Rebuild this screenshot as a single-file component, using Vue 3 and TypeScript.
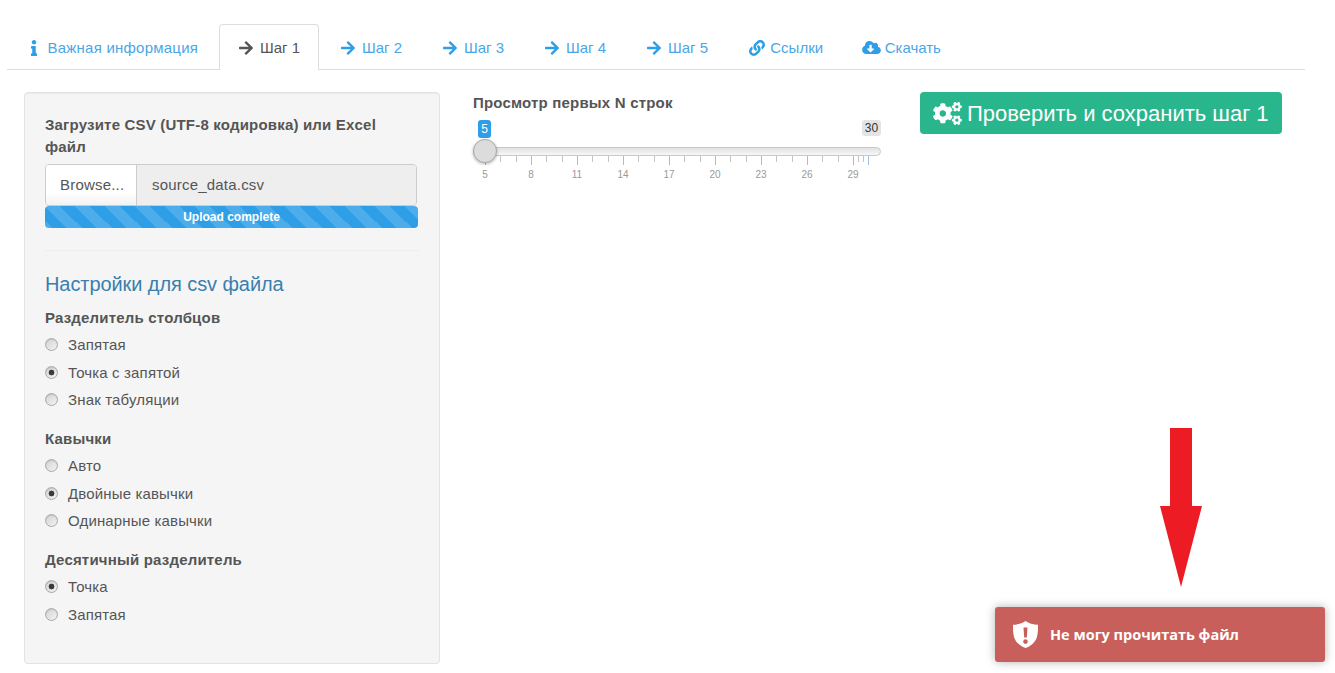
<script setup lang="ts">
interface Tab { label: string; icon: string; active?: boolean }
interface RadioGroup { title: string; name: string; options: { label: string; checked?: boolean }[] }

const tabs: Tab[] = [
  { label: 'Важная информация', icon: 'info' },
  { label: 'Шаг 1', icon: 'arrow', active: true },
  { label: 'Шаг 2', icon: 'arrow' },
  { label: 'Шаг 3', icon: 'arrow' },
  { label: 'Шаг 4', icon: 'arrow' },
  { label: 'Шаг 5', icon: 'arrow' },
  { label: 'Ссылки', icon: 'link' },
  { label: 'Скачать', icon: 'cloud' },
]

const groups: RadioGroup[] = [
  { title: 'Разделитель столбцов', name: 'sep', options: [{ label: 'Запятая' }, { label: 'Точка с запятой', checked: true }, { label: 'Знак табуляции' }] },
  { title: 'Кавычки', name: 'quote', options: [{ label: 'Авто' }, { label: 'Двойные кавычки', checked: true }, { label: 'Одинарные кавычки' }] },
  { title: 'Десятичный разделитель', name: 'dec', options: [{ label: 'Точка', checked: true }, { label: 'Запятая' }] },
]

const UNIT = 15.333
const pos = (v: number) => `${(v - 5) * UNIT}px`
const majors = [5, 8, 11, 14, 17, 20, 23, 26, 29]
const minors: number[] = []
for (let v = 5; v < 29; v++) if ((v - 5) % 3 !== 0) minors.push(v)
minors.push(29.33, 29.67)

const icons: Record<string, { box: string; d: string; w: number; h: number }> = {
  info: { box: '0 0 192 512', w: 6, h: 16, d: 'M20 424.229h20V279.771H20c-11.046 0-20-8.954-20-20V212c0-11.046 8.954-20 20-20h112c11.046 0 20 8.954 20 20v212.229h20c11.046 0 20 8.954 20 20V492c0 11.046-8.954 20-20 20H20c-11.046 0-20-8.954-20-20v-47.771c0-11.046 8.954-20 20-20zM96 0C56.235 0 24 32.235 24 72s32.235 72 72 72 72-32.235 72-72S135.764 0 96 0z' },
  arrow: { box: '0 0 448 512', w: 14, h: 16, d: 'M190.5 66.9l22.2-22.2c9.4-9.4 24.6-9.4 33.9 0L441 239c9.4 9.4 9.4 24.6 0 33.9L246.6 467.3c-9.4 9.4-24.6 9.4-33.9 0l-22.2-22.2c-9.5-9.5-9.3-25 .4-34.3L311.4 296H24c-13.3 0-24-10.7-24-24v-32c0-13.3 10.7-24 24-24h287.4L190.9 101.2c-9.8-9.3-10-24.8-.4-34.3z' },
  link: { box: '0 0 512 512', w: 16, h: 16, d: 'M326.612 185.391c59.747 59.809 58.927 155.698.36 214.59-.11.12-.24.25-.36.37l-67.2 67.2c-59.27 59.27-155.699 59.262-214.96 0-59.27-59.26-59.27-155.7 0-214.96l37.106-37.106c9.84-9.84 26.786-3.3 27.294 10.606.648 17.722 3.826 35.527 9.69 52.721 1.986 5.822.567 12.262-3.783 16.612l-13.087 13.087c-28.026 28.026-28.905 73.66-1.155 101.96 28.024 28.579 74.086 28.749 102.325.51l67.2-67.19c28.191-28.191 28.073-73.757 0-101.83-3.701-3.694-7.429-6.564-10.341-8.569a16.037 16.037 0 0 1-6.947-12.606c-.396-10.567 3.348-21.456 11.698-29.806l21.054-21.055c5.521-5.521 14.182-6.199 20.584-1.731a152.482 152.482 0 0 1 20.522 17.197zM467.547 44.449c-59.261-59.262-155.69-59.27-214.96 0l-67.2 67.2c-.12.12-.25.25-.36.37-58.566 58.892-59.387 154.781.36 214.59a152.454 152.454 0 0 0 20.521 17.196c6.402 4.468 15.064 3.789 20.584-1.731l21.054-21.055c8.35-8.35 12.094-19.239 11.698-29.806a16.037 16.037 0 0 0-6.947-12.606c-2.912-2.005-6.64-4.875-10.341-8.569-28.073-28.073-28.191-73.639 0-101.83l67.2-67.19c28.239-28.239 74.3-28.069 102.325.51 27.75 28.3 26.872 73.934-1.155 101.96l-13.087 13.087c-4.35 4.35-5.769 10.79-3.783 16.612 5.864 17.194 9.042 34.999 9.69 52.721.509 13.906 17.454 20.446 27.294 10.606l37.106-37.106c59.271-59.259 59.271-155.699.001-214.959z' },
  cloud: { box: '0 0 640 512', w: 19, h: 15, d: 'M537.6 226.6c4.1-10.7 6.4-22.4 6.4-34.6 0-53-43-96-96-96-19.7 0-38.1 6-53.3 16.2C367 64.2 315.3 32 256 32c-88.4 0-160 71.6-160 160 0 2.7.1 5.4.2 8.1C40.2 219.8 0 273.2 0 336c0 79.5 64.5 144 144 144h368c70.7 0 128-57.3 128-128 0-61.9-44-113.6-102.4-125.4zm-132.9 88.7L299.3 420.7c-6.2 6.2-16.4 6.2-22.6 0L171.3 315.3c-10.1-10.1-2.9-27.3 11.3-27.3H248V176c0-8.8 7.2-16 16-16h48c8.8 0 16 7.2 16 16v112h65.4c14.2 0 21.4 17.2 11.3 27.3z' },
}

const cogs = 'M512.1 191l-8.2 14.3c-3 5.3-9.4 7.5-15.1 5.4-11.8-4.4-22.6-10.7-32.1-18.6-4.6-3.8-5.8-10.5-2.8-15.7l8.2-14.3c-6.9-8-12.3-17.3-15.9-27.4h-16.5c-6 0-11.2-4.3-12.2-10.3-2-12-2.1-24.6 0-37.1 1-6 6.2-10.4 12.2-10.4h16.5c3.6-10.1 9-19.4 15.9-27.4l-8.2-14.3c-3-5.2-1.9-11.9 2.8-15.7 9.5-7.9 20.4-14.2 32.1-18.6 5.7-2.1 12.1.1 15.1 5.4l8.2 14.3c10.5-1.9 21.2-1.9 31.7 0L552 6.3c3-5.3 9.4-7.5 15.1-5.4 11.8 4.4 22.6 10.7 32.1 18.6 4.6 3.8 5.8 10.5 2.8 15.7l-8.2 14.3c6.9 8 12.3 17.3 15.9 27.4h16.5c6 0 11.2 4.3 12.2 10.3 2 12 2.1 24.6 0 37.1-1 6-6.2 10.4-12.2 10.4h-16.5c-3.6 10.1-9 19.4-15.9 27.4l8.2 14.3c3 5.2 1.9 11.9-2.8 15.7-9.5 7.9-20.4 14.2-32.1 18.6-5.7 2.1-12.1-.1-15.1-5.4l-8.2-14.3c-10.4 1.9-21.2 1.9-31.7 0zm-10.5-58.8c38.5 29.6 82.4-14.3 52.8-52.8-38.5-29.7-82.4 14.3-52.8 52.8zM386.3 286.1l33.7 16.8c10.1 5.8 14.5 18.1 10.5 29.1-8.9 24.2-26.4 46.4-42.6 65.8-7.4 8.9-20.2 11.1-30.3 5.3l-29.1-16.8c-16 13.7-34.6 24.6-54.9 31.7v33.6c0 11.6-8.3 21.6-19.7 23.6-24.6 4.2-50.4 4.4-75.9 0-11.5-2-20-11.9-20-23.6V418c-20.3-7.2-38.9-18-54.9-31.7L74 403c-10 5.8-22.9 3.6-30.3-5.3-16.2-19.4-33.3-41.6-42.2-65.7-4-10.9.4-23.2 10.5-29.1l33.3-16.8c-3.9-20.9-3.9-42.4 0-63.4L12 205.8c-10.1-5.8-14.6-18.1-10.5-29 8.9-24.2 26-46.4 42.2-65.8 7.4-8.9 20.2-11.1 30.3-5.3l29.1 16.8c16-13.7 34.6-24.6 54.9-31.7V57.1c0-11.5 8.2-21.5 19.6-23.5 24.6-4.2 50.5-4.4 76-.1 11.5 2 20 11.9 20 23.6v33.6c20.3 7.2 38.9 18 54.9 31.7l29.1-16.8c10-5.8 22.9-3.6 30.3 5.3 16.2 19.4 33.2 41.6 42.1 65.8 4 10.9.1 23.2-10 29.1l-33.7 16.8c3.9 21 3.9 42.5 0 63.5zm-117.6 21.1c59.2-77-28.7-164.9-105.7-105.7-59.2 77 28.7 164.9 105.7 105.7zm243.4 182.7l-8.2 14.3c-3 5.3-9.4 7.5-15.1 5.4-11.8-4.4-22.6-10.7-32.1-18.6-4.6-3.8-5.8-10.5-2.8-15.7l8.2-14.3c-6.9-8-12.3-17.3-15.9-27.4h-16.5c-6 0-11.2-4.3-12.2-10.3-2-12-2.1-24.6 0-37.1 1-6 6.2-10.4 12.2-10.4h16.5c3.6-10.1 9-19.4 15.9-27.4l-8.2-14.3c-3-5.2-1.9-11.9 2.8-15.7 9.5-7.9 20.4-14.2 32.1-18.6 5.7-2.1 12.1.1 15.1 5.4l8.2 14.3c10.5-1.9 21.2-1.9 31.7 0l8.2-14.3c3-5.3 9.4-7.5 15.1-5.4 11.8 4.4 22.6 10.7 32.1 18.6 4.6 3.8 5.8 10.5 2.8 15.7l-8.2 14.3c6.9 8 12.3 17.3 15.9 27.4h16.5c6 0 11.2 4.3 12.2 10.3 2 12 2.1 24.6 0 37.1-1 6-6.2 10.4-12.2 10.4h-16.5c-3.6 10.1-9 19.4-15.9 27.4l8.2 14.3c3 5.2 1.9 11.9-2.8 15.7-9.5 7.9-20.4 14.2-32.1 18.6-5.7 2.1-12.1-.1-15.1-5.4l-8.2-14.3c-10.4 1.9-21.2 1.9-31.7 0zM501.6 431c38.5 29.6 82.4-14.3 52.8-52.8-38.5-29.6-82.4 14.3-52.8 52.8z'
</script>

<template>
  <div class="page">
    <ul class="tabs">
      <li v-for="t in tabs" :key="t.label" class="tab" :class="{ active: t.active }">
        <svg class="tab-icon" :class="'i-' + t.icon" :viewBox="icons[t.icon].box" :width="icons[t.icon].w" :height="icons[t.icon].h">
          <path fill="currentColor" :d="icons[t.icon].d" />
        </svg>
        <span>{{ t.label }}</span>
      </li>
    </ul>

    <div class="content">
      <aside class="well">
        <label class="lbl upload-lbl">Загрузите CSV (UTF-8 кодировка) или Excel файл</label>
        <div class="file-row">
          <span class="browse">Browse...</span>
          <span class="file-name">source_data.csv</span>
        </div>
        <div class="progress">Upload complete</div>
        <hr class="divider" />
        <h4 class="settings">Настройки для csv файла</h4>
        <div class="groups">
          <div v-for="g in groups" :key="g.name" class="group">
            <label class="lbl group-title">{{ g.title }}</label>
            <label v-for="o in g.options" :key="o.label" class="radio-row">
              <input class="radio" type="radio" :name="g.name" :checked="o.checked" />
              <span>{{ o.label }}</span>
            </label>
          </div>
        </div>
      </aside>

      <section class="slider-col">
        <label class="lbl slider-title">Просмотр первых N строк</label>
        <div class="slider">
          <span class="val-from">5</span>
          <span class="val-to">30</span>
          <div class="track"></div>
          <div class="scale">
            <i v-for="m in minors" :key="m" class="tick minor" :style="{ left: pos(m) }"></i>
            <i v-for="m in majors" :key="m" class="tick major" :style="{ left: pos(m) }"></i>
            <i class="tick major" :style="{ left: pos(30) }"></i>
            <span v-for="m in majors" :key="'l' + m" class="tick-label" :style="{ left: pos(m) }">{{ m }}</span>
          </div>
          <div class="handle"></div>
        </div>
      </section>

      <button class="save" type="button">
        <svg viewBox="0 0 640 512" width="29" height="23"><path fill="currentColor" :d="cogs" /></svg>
        <span class="save-text">Проверить и сохранить шаг 1</span>
      </button>
    </div>

    <svg class="red-arrow" viewBox="0 0 42 159" width="42" height="159">
      <path fill="#ed1c24" d="M10 0h22v78h10L21 159 0 78h10z" />
    </svg>

    <div class="toast">
      <svg viewBox="0 0 25 27" width="25" height="27">
        <path fill="#fff" fill-rule="evenodd" d="M12.5 0C15.5 2.2 20 3.6 25 3.8c0 4.5 0 9-1.2 12.6-1.5 4.6-5.6 8.6-11.3 10.6C6.8 25 2.700 21 1.200 16.400 0 12.800 0 8.300 0 3.800 5 3.600 9.500 2.200 12.500 0zM10.500 6.500l.7 10h2.600l.7-10zM12.500 18.300a2.300 2.300 0 1 0 0 4.600 2.300 2.300 0 0 0 0-4.600z" />
      </svg>
      <span>Не могу прочитать файл</span>
    </div>
  </div>
</template>

<style>
html, body { margin: 0; background: #fff; }
</style>

<style scoped>
.page {
  position: relative;
  height: 673px;
  overflow: hidden;
  box-sizing: border-box;
  padding: 24px 30px 0 7px;
  font-family: "Liberation Sans", Arial, sans-serif;
  font-size: 15px;
  line-height: 21px;
  color: #555;
}
.tabs {
  display: flex;
  list-style: none;
  margin: 0;
  padding: 0 0 0 4.5px;
  height: 45px;
  border-bottom: 1px solid #ddd;
}
.tab {
  display: flex;
  align-items: center;
  gap: 7px;
  height: 46px;
  box-sizing: border-box;
  padding: 0 18px 0 18.5px;
  margin-right: 2.43px;
  border: 1px solid transparent;
  border-bottom: 0;
  border-radius: 4px 4px 0 0;
  color: #4ba6e8;
  white-space: nowrap;
}
.tab:first-child { letter-spacing: .23px; margin-right: 2.3px; }
.tab:nth-child(6) { margin-right: 4.43px; }
.tab:nth-child(7) { margin-right: 4.8px; }
.tab-icon { flex: none; color: #2e9fe6; }
.tab.active {
  background: #fff;
  border-color: #ddd;
  color: #555;
}
.tab.active .tab-icon { color: #555; }
.i-info { margin-right: 3.5px; }
.i-link { margin-left: -2px; margin-right: -1.7px; }
.i-cloud { margin-left: -4px; margin-right: -3.7px; }

.content { display: flex; align-items: flex-start; padding: 22px 0 0 17px; }

.well {
  flex: none;
  width: 416px;
  height: 572px;
  box-sizing: border-box;
  padding: 21px 20px 0;
  background: #f5f5f5;
  border: 1px solid #e3e3e3;
  border-radius: 4px;
  box-shadow: inset 0 1px 1px rgba(0, 0, 0, .05);
}
.lbl { display: block; font-weight: 700; font-size: 15px; line-height: 22px; color: #555; letter-spacing: .19px; }
.upload-lbl { width: 350px; }
.file-row {
  display: flex;
  width: 372px;
  height: 42px;
  margin-top: 6px;
  box-sizing: border-box;
  border: 1px solid #ccc;
  border-radius: 4px;
  overflow: hidden;
  font-size: 15px;
  letter-spacing: .2px;
}
.browse {
  flex: none;
  width: 91px;
  box-sizing: border-box;
  line-height: 40px;
  padding-left: 14px;
  background: linear-gradient(#fff 70%, #f2f2f2);
  border-right: 1px solid #ccc;
  color: #555;
}
.file-name { flex: 1; background: #eee; line-height: 40px; padding-left: 15px; color: #555; }
.progress {
  width: 373px;
  height: 22px;
  border-radius: 4px;
  background-color: #2e9fe6;
  background-image: linear-gradient(45deg, rgba(255,255,255,.15) 25%, transparent 25%, transparent 50%, rgba(255,255,255,.15) 50%, rgba(255,255,255,.15) 75%, transparent 75%, transparent);
  background-size: 30px 30px;
  color: #fff;
  font-size: 12px;
  font-weight: 700;
  line-height: 22px;
  text-align: center;
}
.divider { margin: 22px 0 0; border: 0; border-top: 1px solid #eee; }
.settings {
  margin: 21px 0 0;
  font-weight: 400;
  font-size: 20px;
  line-height: 24px;
  letter-spacing: -.08px;
  color: #3a7fae;
}
.groups { margin-top: 11px; }
.group { padding-bottom: 14.5px; }
.group-title { height: 22px; margin-bottom: 2px; }
.radio-row {
  display: flex;
  align-items: center;
  gap: 10px;
  height: 27.5px;
  font-size: 15px;
  letter-spacing: .15px;
  color: #555;
}
.radio {
  appearance: none;
  flex: none;
  width: 13px;
  height: 13px;
  margin: 0;
  border: 1px solid #a9a9a9;
  border-radius: 50%;
  background: linear-gradient(135deg, #d4d4d4, #f2f2f2);
  box-shadow: inset 0 1px 1px rgba(0,0,0,.12);
}
.radio:checked {
  background: radial-gradient(circle, #3a3a3a 0 2.6px, transparent 3.2px), linear-gradient(135deg, #d4d4d4, #f2f2f2);
}

.slider-col { flex: none; width: 408px; margin-left: 33px; }
.slider-title { line-height: 22px; }
.slider { position: relative; height: 85px; margin-top: 6px; }
.val-from, .val-to {
  position: absolute;
  top: 0;
  border-radius: 3px;
  font-size: 12px;
  text-align: center;
}
.val-from { left: 5px; width: 13px; height: 18px; line-height: 18px; background: #2e9fe6; color: #fff; }
.val-to { right: 0; width: 19px; height: 16px; line-height: 16px; background: #e4e4e4; color: #333; }
.track {
  position: absolute;
  top: 27px;
  left: 0;
  right: 0;
  height: 9px;
  box-sizing: border-box;
  border: 1px solid #c8c8c8;
  border-radius: 5px;
  background: linear-gradient(#e2e2e2, #f7f7f7);
}
.scale { position: absolute; top: 36px; left: 12px; right: 0; height: 30px; }
.tick { position: absolute; top: 0; width: 1px; }
.tick.minor { height: 6px; background: #c4c4c4; }
.tick.major { height: 9px; background: #9dbfe0; }
.tick-label {
  position: absolute;
  top: 13px;
  width: 24px;
  margin-left: -12px;
  font-size: 10px;
  line-height: 12px;
  text-align: center;
  color: #999;
}
.handle {
  position: absolute;
  top: 18.5px;
  left: 0;
  width: 24px;
  height: 24px;
  box-sizing: border-box;
  border: 1px solid #aaa;
  border-radius: 50%;
  background: #dcdcdc;
  box-shadow: 0 1px 3px rgba(0,0,0,.3);
}

.save {
  flex: none;
  display: flex;
  align-items: center;
  gap: 5px;
  width: 362px;
  height: 42px;
  margin-left: 39px;
  padding: 0 0 0 13px;
  border: 0;
  border-radius: 4px;
  background: #2ab68c;
  color: #fff;
  font: 22px/42px "Liberation Sans", Arial, sans-serif;
  white-space: nowrap;
}
.save-text { margin-top: 1px; }

.red-arrow { position: absolute; left: 1160px; top: 428px; }

.toast {
  position: absolute;
  left: 995px;
  top: 607px;
  width: 330px;
  height: 55px;
  box-sizing: border-box;
  display: flex;
  align-items: center;
  gap: 12px;
  padding-left: 18px;
  border-radius: 3px;
  background: #c95f5a;
  box-shadow: 0 0 10px rgba(0,0,0,.3);
  color: #fff;
  font-family: "Open Sans", sans-serif;
  font-size: 14.5px;
  font-weight: 700;
}
</style>
